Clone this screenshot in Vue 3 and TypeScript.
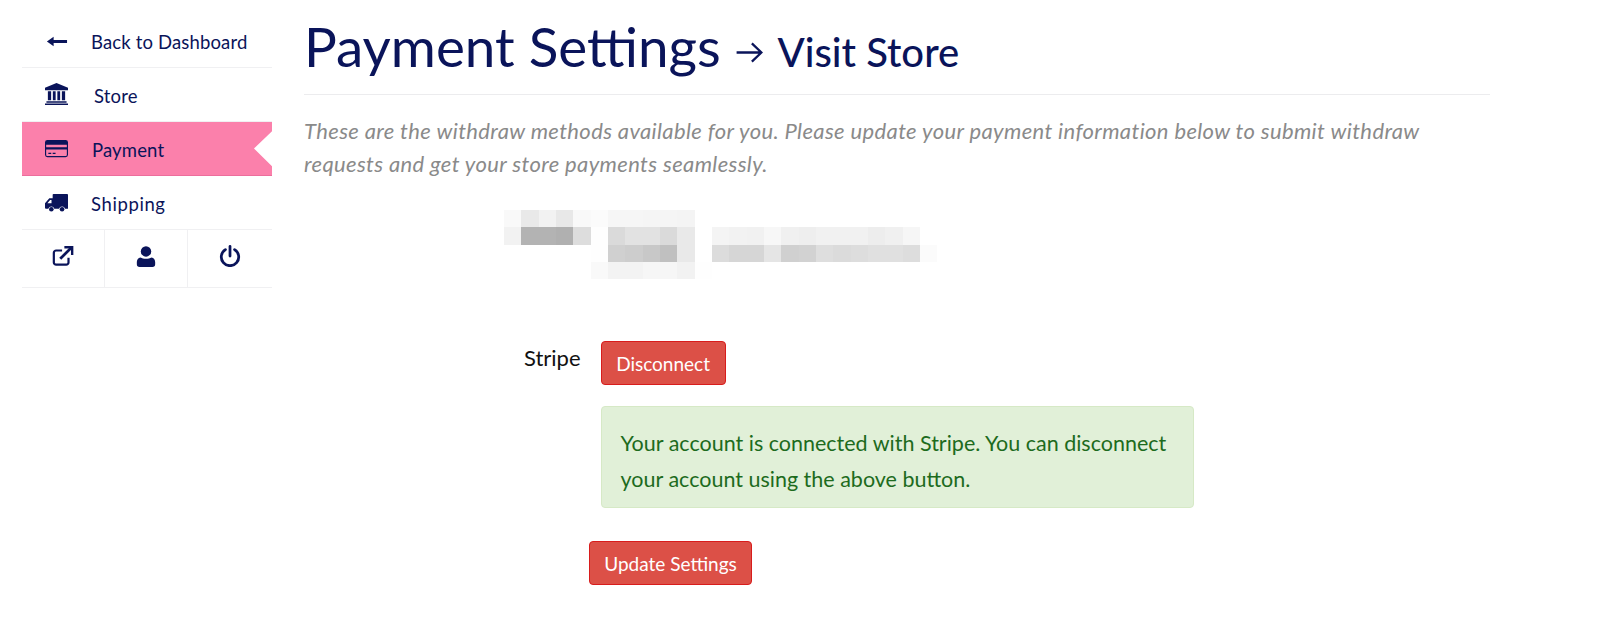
<script setup lang="ts">
// 模糊区域的色块，每行从 offset 列开始
const blurRows: { offset: number; cells: number[] }[] = [
  { offset: 0, cells: [0xf9, 0xe9, 0xf2, 0xe8, 0xf9, 0xfb, 0xf6, 0xf6, 0xf5, 0xf5, 0xf4] },
  { offset: 0, cells: [0xf2, 0xb3, 0xb3, 0xb0, 0xdd, 0xfe, 0xda, 0xe2, 0xe2, 0xda, 0xe9, 0xff, 0xf4, 0xf2, 0xf1, 0xf7, 0xf0, 0xee, 0xf1, 0xf1, 0xf1, 0xed, 0xf0, 0xf6] },
  { offset: 5, cells: [0xfe, 0xd0, 0xcd, 0xc8, 0xc0, 0xe9, 0xff, 0xdc, 0xd6, 0xd6, 0xe5, 0xd0, 0xd2, 0xde, 0xdb, 0xdd, 0xe0, 0xe0, 0xdd, 0xfb] },
  { offset: 5, cells: [0xf9, 0xf3, 0xf3, 0xf6, 0xf6, 0xf2, 0xfe] },
]

function cellStyle(v: number) {
  return { background: `rgb(${v},${v},${v})` }
}
</script>

<template>
  <div class="page">
    <aside class="sidebar">
      <a class="nav-item back">
        <svg class="nav-icon" viewBox="0 0 24 24"><path d="M2 12 9 7v3.500h14v3H9V17z" /></svg>
        <span>Back to Dashboard</span>
      </a>
      <a class="nav-item store">
        <svg class="nav-icon" viewBox="0 0 24 24">
          <path d="M12 0 24 5v2.500H0V5zM3 8.500h3.400v9.500H3zM8.200 8.500h2.900v9.500H8.200zM12.900 8.500h2.900v9.500h-2.900zM17.600 8.500H21v9.500h-3.400zM1.500 19h21v1.500h-21zM0 21.500h24V23H0z" />
        </svg>
        <span>Store</span>
      </a>
      <a class="nav-item payment">
        <svg class="nav-icon" viewBox="0 0 24 24">
          <path fill-rule="evenodd" d="M2.500 3h19A2.500 2.500 0 0 1 24 5.500v13a2.500 2.500 0 0 1-2.500 2.500h-19A2.500 2.500 0 0 1 0 18.500v-13A2.500 2.500 0 0 1 2.500 3zM1.200 8v2.800h21.600V8zM1.200 13v5.500c0 .7.600 1.300 1.300 1.300h19c.7 0 1.300-.6 1.300-1.300V13zM3.500 16.500h3v1.200h-3zM8 16.500h3v1.200H8z" />
        </svg>
        <span>Payment</span>
      </a>
      <a class="nav-item shipping">
        <svg class="nav-icon" viewBox="0 0 24 24">
          <path fill-rule="evenodd" d="M9 3h14a1 1 0 0 1 1 1v14.500h-3.100a3.200 3.200 0 0 0-6.200 0H9.700a3.200 3.200 0 0 0-6.200 0H1a1 1 0 0 1-1-1v-4.800L4.500 7.500H8V4a1 1 0 0 1 1-1zM5.300 9.500 2.500 12.700h4.300V9.500z" />
          <circle cx="6.600" cy="19" r="2.400" />
          <circle cx="17.800" cy="19" r="2.400" />
        </svg>
        <span>Shipping</span>
      </a>
      <div class="nav-tools">
        <a class="tool">
          <svg class="tool-icon outline" viewBox="0 0 24 24" stroke="currentColor" stroke-width="2.400">
            <path d="M18 14v5a2.500 2.500 0 0 1-2.500 2.500h-11A2.500 2.500 0 0 1 2 19V8.500A2.500 2.500 0 0 1 4.500 6H11" />
            <path d="M9 15 21 3" stroke-width="3" />
            <path d="M13.500 2.500h8.500V11" stroke-width="2.600" />
          </svg>
        </a>
        <a class="tool">
          <svg class="tool-icon" viewBox="0 0 24 24">
            <circle cx="12" cy="7" r="5.700" />
            <path d="M6 13.500c1.500 1 3.800 1.500 6 1.500s4.500-.5 6-1.500c2.500.5 4 2.500 4 5V21a3 3 0 0 1-3 3H5a3 3 0 0 1-3-3v-2.500c0-2.500 1.500-4.500 4-5z" />
          </svg>
        </a>
        <a class="tool">
          <svg class="tool-icon outline" viewBox="0 0 24 24" stroke="currentColor" stroke-width="3">
            <path d="M12 1.500V12" stroke-linecap="round" />
            <path d="M7 5a9.500 9.500 0 1 0 10 0" stroke-linecap="round" />
          </svg>
        </a>
      </div>
    </aside>

    <main class="content">
      <header class="page-head">
        <h1>Payment Settings</h1>
        <a class="visit">
          <svg class="visit-arrow" viewBox="0 0 28 22" fill="none" stroke="currentColor" stroke-width="2.400">
            <path d="M1 11h26M17 1.500 27 11l-10 9.500" />
          </svg>
          Visit Store
        </a>
      </header>

      <p class="intro">
        These are the withdraw methods available for you. Please update your payment information below to submit withdraw requests and get your store payments seamlessly.
      </p>

      <div class="blurred">
        <div v-for="(row, i) in blurRows" :key="i" class="blur-row" :style="{ paddingLeft: row.offset * 17.33 + 'px' }">
          <i v-for="(v, j) in row.cells" :key="j" :style="cellStyle(v)"></i>
        </div>
      </div>

      <form class="settings" @submit.prevent>
        <div class="field">
          <label>Stripe</label>
          <div class="field-body">
            <button type="button" class="btn disconnect">Disconnect</button>
            <div class="alert">Your account is connected with Stripe. You can disconnect your account using the above button.</div>
          </div>
        </div>
        <button type="submit" class="btn update">Update Settings</button>
      </form>
    </main>
  </div>
</template>

<style>
html, body { background: #fff; }
</style>

<style scoped>
.page {
  color: #0a145a;
  display: flex;
  font-family: Lato, "Open Sans", sans-serif;
  gap: 32px;
  height: 627px;
  overflow: hidden;
  padding-left: 22px;
}
.sidebar { flex: none; width: 250px; }
.nav-item {
  align-items: center;
  border-bottom: 1px solid #f0f0f2;
  box-sizing: border-box;
  display: flex;
  font-size: 18.5px;
  height: 54px;
  letter-spacing: 0.15px;
}
.nav-item span { padding-top: 2px; }
.nav-item.back { height: 68px; padding-top: 15px; }
.nav-icon { fill: currentColor; flex: none; height: 23px; margin-left: 23px; width: 23px; }
.back span, .shipping span { margin-left: 23px; }
.shipping span { letter-spacing: 0.6px; }
.store span { margin-left: 26px; }
.payment span { margin-left: 24px; }
.payment {
  background: #fb80ab;
  border-bottom-color: #ec6e9c;
  clip-path: polygon(0 0, 100% 0, 100% 17%, 232px 49%, 100% 82%, 100% 100%, 0 100%);
}
.nav-tools {
  border-bottom: 1px solid #f0f0f2;
  box-sizing: border-box;
  display: grid;
  grid-template-columns: 82px 83px 85px;
  height: 58px;
}
.tool {
  align-items: center;
  display: flex;
  justify-content: center;
}
.tool + .tool { border-left: 1px solid #f0f0f2; }
.tool-icon { fill: currentColor; height: 22px; margin-bottom: 5px; width: 22px; }
.tool-icon.outline { fill: none; }

.content { flex: none; width: 1186px; }
.page-head {
  align-items: baseline;
  border-bottom: 1px solid #ececee;
  box-sizing: border-box;
  display: flex;
  height: 95px;
}
h1 {
  font-size: 54.8px;
  font-weight: 400;
  line-height: 1;
  margin: 19px 0 0;
}
.visit {
  font-size: 40px;
  font-weight: 500;
  margin-left: 14px;
}
.visit-arrow { height: 21px; margin-right: 6px; vertical-align: 4px; width: 28px; }
.intro {
  color: #8a8a8a;
  font-size: 22px;
  font-style: italic;
  letter-spacing: 0.37px;
  line-height: 33px;
  margin: 19px 0 0;
  max-width: 1130px;
}
.blurred { margin: 30px 0 0 200px; }
.blur-row { display: flex; height: 17.33px; }
.blur-row i { flex: none; height: 100%; width: 17.33px; }

.settings { margin-top: 62px; }
.field { display: flex; margin-left: 220px; }
.field label {
  color: #111;
  flex: none;
  font-size: 22px;
  line-height: 34px;
  margin-right: 20px;
}
.btn {
  background: #dc5047;
  border: 1px solid #d81c1c;
  border-radius: 4px;
  color: #fff;
  font-family: inherit;
  font-size: 19px;
  height: 44px;
}
.disconnect { display: block; width: 125px; }
.alert {
  background: #e1f0d8;
  border: 1px solid #d6e9c6;
  border-radius: 4px;
  box-sizing: border-box;
  color: #1d6b1d;
  font-size: 21.5px;
  height: 102px;
  line-height: 36px;
  margin-top: 21px;
  padding: 18px 19px;
  width: 593px;
}
.update { display: block; margin: 33px 0 0 285px; width: 163px; }
</style>
